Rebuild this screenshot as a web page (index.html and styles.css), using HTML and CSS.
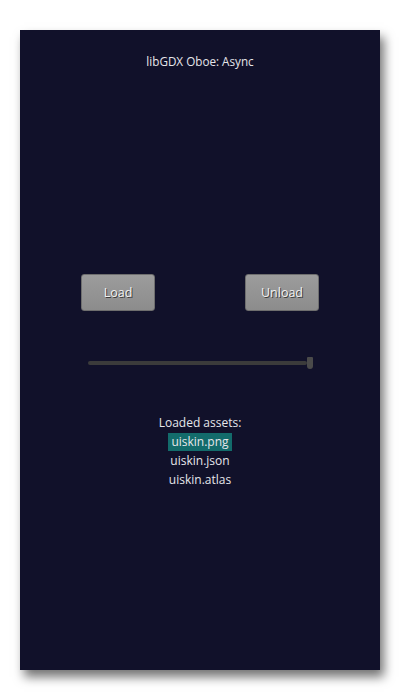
FILE: index.html
```html
<!DOCTYPE html>
<html>
<head>
<meta charset="utf-8">
<link rel="stylesheet" href="styles.css">
</head>
<body>
<div class="screen">
  <div class="title">libGDX Oboe: Async</div>
  <div class="buttons">
    <div class="btn">Load</div>
    <div class="btn">Unload</div>
  </div>
  <div class="slider">
    <div class="track"></div>
    <div class="knob"></div>
  </div>
  <div class="assets">
    <div class="line">Loaded assets:</div>
    <div class="line"><span class="sel">uiskin.png</span></div>
    <div class="line">uiskin.json</div>
    <div class="line">uiskin.atlas</div>
  </div>
</div>
</body>
</html>
```
FILE: styles.css
```css
html, body {
  margin: 0;
  padding: 0;
  background: #ffffff;
}
body {
  padding: 30px 20px;
  font-family: "Open Sans", "Noto Sans", sans-serif;
}
.screen {
  width: 360px;
  height: 640px;
  background: #11112a;
  box-shadow: 4px 7px 10px rgba(0, 0, 0, 0.55);
  display: flex;
  flex-direction: column;
  align-items: center;
  color: #e6e6ea;
}
.title {
  margin-top: 23px;
  font-size: 11.7px;
  line-height: 16px;
}
.buttons {
  margin-top: 205px;
  align-self: stretch;
  display: flex;
  justify-content: space-between;
  padding: 0 61px;
}
.btn {
  width: 72px;
  height: 35px;
  border: 1px solid #6e6e6e;
  border-radius: 3px;
  background: linear-gradient(#9c9c9c, #8c8c8c);
  display: flex;
  align-items: center;
  justify-content: center;
  font-size: 12.5px;
  color: #f2f2f2;
  text-shadow: 1px 1px 0 #3a3a3a;
}
.slider {
  margin-top: 46px;
  display: flex;
  align-items: center;
  width: 225px;
  margin-left: 1px;
}
.track {
  width: 219px;
  height: 4px;
  background: #3b3b3b;
  border-radius: 2px;
}
.knob {
  width: 6px;
  height: 12px;
  background: #4a4a4a;
  border-radius: 1px 1px 3px 3px;
}
.assets {
  margin-top: 44px;
  display: flex;
  flex-direction: column;
  align-items: center;
  font-size: 12px;
}
.line {
  line-height: 19px;
  height: 19px;
}
.sel {
  display: inline-block;
  background: #136b6b;
  padding: 0 3px;
  line-height: 18px;
}
```
